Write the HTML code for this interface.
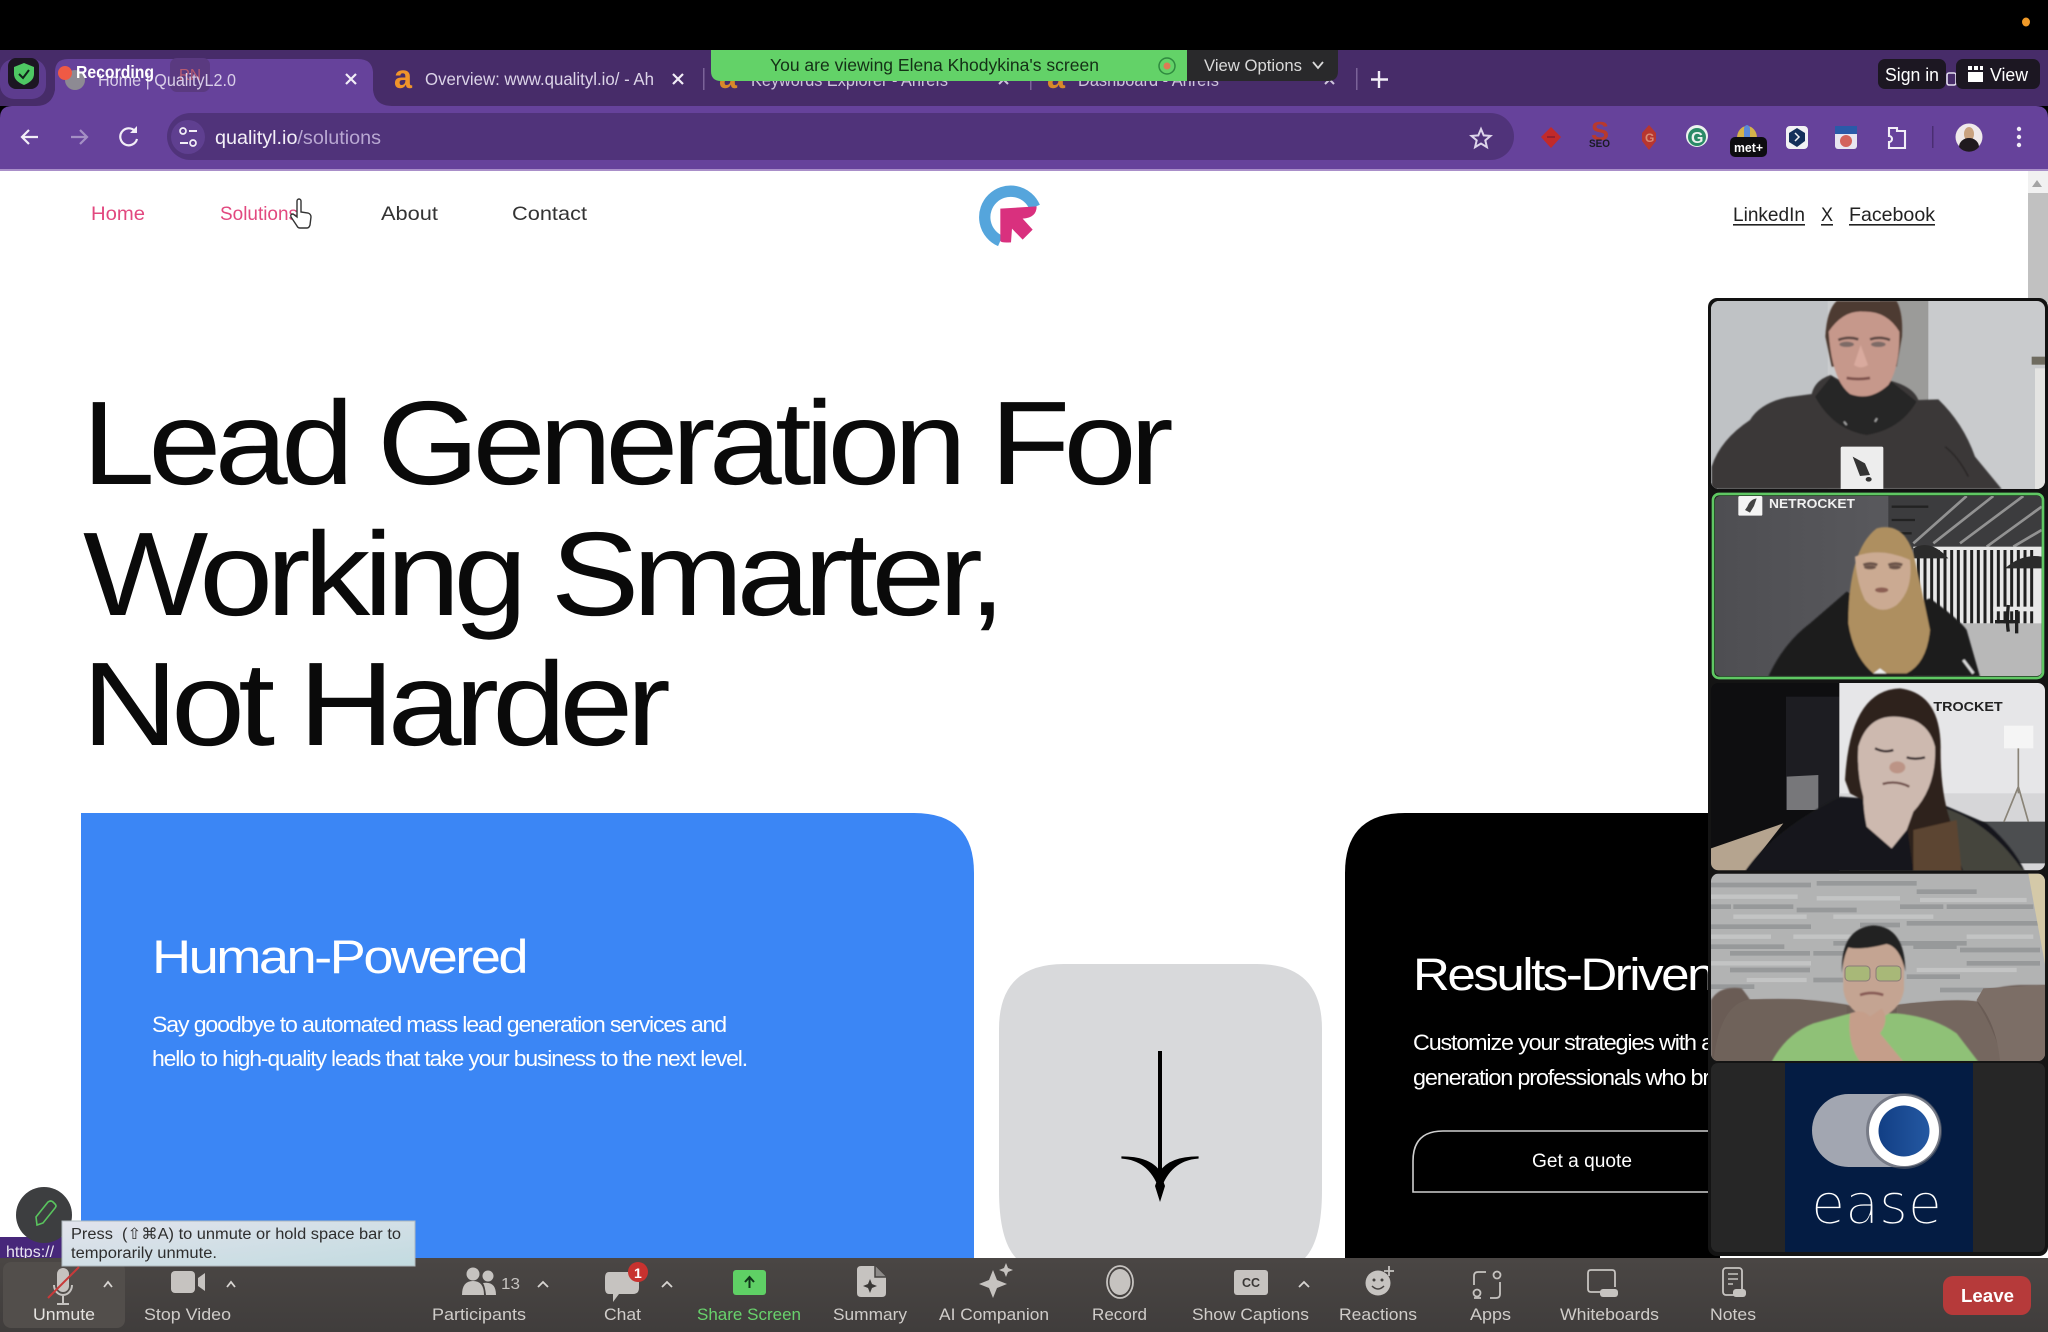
<!DOCTYPE html>
<html lang="en"><head><meta charset="utf-8"><title>Zoom screen share</title>
<style>
html,body{margin:0;padding:0;background:#000;width:2048px;height:1332px;overflow:hidden}
svg{display:block;position:absolute;left:0;top:0}
text{font-family:"Liberation Sans",sans-serif;white-space:pre}
.h{letter-spacing:-6px}
.p{letter-spacing:-1.1px}
.t{letter-spacing:-2.2px}
</style></head><body>
<svg width="2048" height="1332" viewBox="0 0 2048 1332" xmlns="http://www.w3.org/2000/svg">
<defs>
<filter id="b1" x="-10%" y="-10%" width="120%" height="120%"><feGaussianBlur stdDeviation="2.5"/></filter>
<linearGradient id="tip" x1="0" y1="0" x2="1" y2="1"><stop offset="0" stop-color="#e2e3ec"/><stop offset="1" stop-color="#c2dbe0"/></linearGradient>
<linearGradient id="knob" x1="0" y1="0" x2="1" y2="0"><stop offset="0" stop-color="#123f85"/><stop offset="1" stop-color="#2458a2"/></linearGradient>
<linearGradient id="wall2" x1="0" y1="0" x2="1" y2="0"><stop offset="0" stop-color="#4e4e52"/><stop offset="1" stop-color="#626266"/></linearGradient>
<linearGradient id="bar" x1="0" y1="0" x2="0" y2="1"><stop offset="0" stop-color="#4a4644"/><stop offset="1" stop-color="#403d3c"/></linearGradient>
<clipPath id="c1"><rect x="33" y="33" width="1002" height="564" rx="24"/></clipPath>
<clipPath id="c2"><rect x="45" y="618" width="980" height="540" rx="14"/></clipPath>
<clipPath id="c3"><rect x="33" y="9" width="1002" height="562" rx="22"/></clipPath>
<clipPath id="c4"><rect x="33" y="581" width="1002" height="562" rx="22"/></clipPath>
</defs>

<!-- top black -->
<rect width="2048" height="50" fill="#000"/>
<ellipse cx="2026" cy="22" rx="4" ry="4.5" fill="#f09a28"/>

<!-- tab strip -->
<rect y="50" width="2048" height="56" fill="#472c69"/>
<rect x="0" y="59" width="46" height="40" rx="14" fill="#5d3c8e"/>
<path d="M36 106Q52 106 55 90V72Q55 59 68 59H358Q372 59 373 72V90Q375 106 392 106Z" fill="#66429b"/>
<rect x="8" y="58" width="31" height="31" rx="8" fill="#1c1622"/>
<path d="M24 63L34 67V74Q34 81 24 85Q14 81 14 74V67Z" fill="#4ec863"/>
<path d="M19 74L23 78L29 70" fill="none" stroke="#10251a" stroke-width="2"/>
<circle cx="75" cy="80" r="10" fill="#8d8a93"/>
<circle cx="65" cy="73" r="7" fill="#ef5a45"/>
<rect x="170" y="58" width="40" height="34" rx="7" fill="#5a3a80"/>
<text x="179" y="80" font-size="16" fill="#b85a70" textLength="22" lengthAdjust="spacingAndGlyphs">RN</text>
<text x="98" y="86" font-size="17.5" fill="#d9cfe8" textLength="138" lengthAdjust="spacingAndGlyphs">Home | QualityL2.0</text>
<text x="76" y="78" font-size="17.5" font-weight="bold" fill="#fff" textLength="78" lengthAdjust="spacingAndGlyphs">Recording</text>
<path d="M346 74l10 10M356 74l-10 10" stroke="#f2eef7" stroke-width="2.2"/>
<text x="394" y="88" font-size="33" font-weight="bold" fill="#f0952a" textLength="18" lengthAdjust="spacingAndGlyphs">a</text>
<text x="425" y="85" font-size="17.5" fill="#dcd4e8" textLength="229" lengthAdjust="spacingAndGlyphs">Overview: www.qualityl.io/ - Ah</text>
<path d="M673 74l10 10M683 74l-10 10" stroke="#f2eef7" stroke-width="2.2"/>
<rect x="703" y="68" width="1.5" height="22" fill="#7b6399"/>
<text x="719" y="88" font-size="33" font-weight="bold" fill="#d8892a" textLength="18" lengthAdjust="spacingAndGlyphs">a</text>
<text x="751" y="86" font-size="17.5" fill="#cfc5dd" textLength="197" lengthAdjust="spacingAndGlyphs">Keywords Explorer - Ahrefs</text>
<path d="M999 75l9 9M1008 75l-9 9" stroke="#cfc5dd" stroke-width="2"/>
<rect x="1030" y="68" width="1.5" height="22" fill="#7b6399"/>
<text x="1047" y="88" font-size="33" font-weight="bold" fill="#d8892a" textLength="18" lengthAdjust="spacingAndGlyphs">a</text>
<text x="1078" y="86" font-size="17.5" fill="#cfc5dd" textLength="141" lengthAdjust="spacingAndGlyphs">Dashboard - Ahrefs</text>
<path d="M1325 75l9 9M1334 75l-9 9" stroke="#cfc5dd" stroke-width="2"/>
<rect x="1356" y="68" width="1.5" height="22" fill="#7b6399"/>
<path d="M1379 71v17M1371 79.5h17" stroke="#f2eef7" stroke-width="2.4"/>

<!-- zoom banner -->
<path d="M711 50H1187V81H721Q711 81 711 71Z" fill="#63d268"/>
<path d="M1187 50H1338V71Q1338 81 1328 81H1187Z" fill="#29292b"/>
<text x="770" y="71" font-size="17.5" fill="#143016" textLength="329" lengthAdjust="spacingAndGlyphs">You are viewing Elena Khodykina's screen</text>
<circle cx="1167" cy="66" r="8" fill="none" stroke="#2f8a3f" stroke-width="1.5"/>
<circle cx="1167" cy="66" r="3.5" fill="#dd7a55"/>
<text x="1204" y="71" font-size="16.5" fill="#d9d9d9" textLength="98" lengthAdjust="spacingAndGlyphs">View Options</text>
<path d="M1313 62l5 6l5-6" fill="none" stroke="#d9d9d9" stroke-width="1.8"/>
<rect x="1878" y="59" width="68" height="30" rx="7" fill="#1c1722"/>
<text x="1885" y="81" font-size="18" fill="#fff" textLength="54" lengthAdjust="spacingAndGlyphs">Sign in</text>
<rect x="1947" y="73" width="9" height="12" rx="2" fill="none" stroke="#e4dff0" stroke-width="1.6"/>
<rect x="1956" y="59" width="84" height="30" rx="7" fill="#1c1722"/>
<rect x="1968" y="66" width="4" height="4" fill="#fff"/><rect x="1974" y="66" width="4" height="4" fill="#fff"/><rect x="1980" y="66" width="3" height="4" fill="#fff"/><rect x="1968" y="72" width="15" height="10" fill="#fff"/>
<text x="1990" y="81" font-size="18" fill="#fff" textLength="38" lengthAdjust="spacingAndGlyphs">View</text>

<!-- toolbar -->
<path d="M0 118Q0 106 12 106H2036Q2048 106 2048 118V170H0Z" fill="#66429b"/>
<rect y="169" width="2048" height="2" fill="#a98fc9"/>
<rect x="167" y="113" width="1347" height="47" rx="23.5" fill="#50337a"/>
<circle cx="188" cy="137" r="17" fill="#5f3f90"/>
<path d="M38 137H23M29 130l-7 7l7 7" fill="none" stroke="#f2eef7" stroke-width="2.2"/>
<path d="M71 137H86M80 130l7 7l-7 7" fill="none" stroke="#a48fc4" stroke-width="2.2"/>
<path d="M135 131A8.5 8.5 0 1 0 137 139" fill="none" stroke="#f2eef7" stroke-width="2.2"/><path d="M137 126v7h-7z" fill="#f2eef7"/>
<circle cx="183" cy="131" r="3" fill="none" stroke="#f2eef7" stroke-width="1.7"/><path d="M189 131h8M180 143h8" stroke="#f2eef7" stroke-width="1.9"/><circle cx="193" cy="143" r="3" fill="none" stroke="#f2eef7" stroke-width="1.7"/>
<text x="215" y="144" font-size="19.5" textLength="166" lengthAdjust="spacingAndGlyphs"><tspan fill="#f4f0f8">qualityl.io</tspan><tspan fill="#b9a8d2">/solutions</tspan></text>
<path d="M1481 129l2.700 6.400l6.800.5l-5.200 4.500l1.600 6.700l-5.900-3.600l-5.900 3.600l1.600-6.700l-5.200-4.500l6.800-.5z" fill="none" stroke="#ddd5ea" stroke-width="2"/>
<!-- extensions -->
<path d="M1551 127l10 10l-10 11l-10-11z" fill="#c22a2a"/><path d="M1547 137h8" stroke="#8e2030" stroke-width="1.800"/>
<text x="1591" y="140" font-size="26" font-weight="bold" fill="#b8392d" textLength="18" lengthAdjust="spacingAndGlyphs">S</text>
<text x="1589" y="147" font-size="11" font-weight="bold" fill="#1a1a22" textLength="21" lengthAdjust="spacingAndGlyphs">SEO</text>
<path d="M1649 125l7 8v8l-7 9l-7-9v-8z" fill="#b8362f"/><text x="1645" y="142" font-size="12" font-weight="bold" fill="#d88a75">G</text>
<circle cx="1697" cy="136" r="11" fill="#ecf2ee"/><circle cx="1697" cy="137" r="9" fill="#2a8a67"/><text x="1691" y="143" font-size="16" font-weight="bold" fill="#ecf2ee">G</text>
<path d="M1737 138a10 12 0 0 1 20 0z" fill="#d5b34a"/><path d="M1744 128a4 9 0 0 1 6 0v10h-6z" fill="#5b8ad8"/>
<rect x="1730" y="137" width="37" height="20" rx="5" fill="#0d0d10"/>
<text x="1734" y="152" font-size="13" font-weight="bold" fill="#fff" textLength="29" lengthAdjust="spacingAndGlyphs">met+</text>
<rect x="1786" y="126" width="22" height="23" rx="4" fill="#f2f2f4"/><path d="M1797 128l8 5v8l-8 6l-8-5v-9z" fill="#14305a"/><path d="M1795 133l4 4l-4 4" stroke="#f2f2f4" fill="none" stroke-width="1.5"/>
<rect x="1835" y="126" width="22" height="23" rx="3" fill="#e8e6f0"/><rect x="1835" y="126" width="22" height="8" fill="#2a5aa8"/><circle cx="1846" cy="141" r="6" fill="#d3635c"/>
<path d="M1889 128h8v3h8v17h-16v-6a3 3 0 0 0 0-6z" fill="none" stroke="#f2eef7" stroke-width="2.1"/>
<rect x="1932" y="126" width="1.5" height="22" fill="#4a2e72"/>
<circle cx="1969" cy="137" r="13.5" fill="#efe9ea"/><ellipse cx="1969" cy="134" rx="5" ry="7" fill="#c9a27f"/><path d="M1959 147a10 9 0 0 1 20 0a13 13 0 0 1-20 0z" fill="#201a1f"/>
<circle cx="2019" cy="129" r="2.2" fill="#f2eef7"/><circle cx="2019" cy="137" r="2.2" fill="#f2eef7"/><circle cx="2019" cy="145" r="2.2" fill="#f2eef7"/>

<!-- page -->
<rect y="171" width="2048" height="1090" fill="#fff"/>
<rect x="2028" y="171" width="20" height="30" fill="#f1f1f1"/>
<path d="M2037 180l5 7h-10z" fill="#a4a4a4"/>
<rect x="2028" y="193" width="20" height="110" fill="#c1c1c1"/>

<text x="91" y="220" font-size="19.5" fill="#e2487f" textLength="54" lengthAdjust="spacingAndGlyphs">Home</text>
<text x="220" y="220" font-size="19.5" fill="#e2487f" textLength="78" lengthAdjust="spacingAndGlyphs">Solutions</text>
<text x="381" y="220" font-size="19.5" fill="#333" textLength="57" lengthAdjust="spacingAndGlyphs">About</text>
<text x="512" y="220" font-size="19.5" fill="#333" textLength="75" lengthAdjust="spacingAndGlyphs">Contact</text>
<path d="M297 201a2 2 0 0 1 4 0v11l7 1q3 1 3 4l-1 8q-1 3-3 3h-7q-2 0-3-2l-6-9q-1-3 2-3l4 3z" fill="#fff" stroke="#333" stroke-width="1.4"/>

<g transform="translate(936,167) scale(.3333)">
<path d="M193 222A78 78 0 1 1 296 120" fill="none" stroke="#55a5dc" stroke-width="34"/>
<path d="M193 125L302 118Q302 152 260 155L290 188L260 218L228 185L225 226Q195 228 193 222Z" fill="#d9307e"/>
</g>

<text x="1733" y="221" font-size="19.5" fill="#222" textLength="72" lengthAdjust="spacingAndGlyphs">LinkedIn</text>
<text x="1821" y="221" font-size="19.5" fill="#222" textLength="12" lengthAdjust="spacingAndGlyphs">X</text>
<text x="1849" y="221" font-size="19.5" fill="#222" textLength="86" lengthAdjust="spacingAndGlyphs">Facebook</text>
<rect x="1733" y="224" width="72" height="1.6" fill="#222"/><rect x="1821" y="224" width="12" height="1.6" fill="#222"/><rect x="1849" y="224" width="86" height="1.6" fill="#222"/>

<g font-size="119" fill="#0a0a0a">
<text class="h" x="82" y="484" textLength="1085" lengthAdjust="spacingAndGlyphs">Lead Generation For</text>
<text class="h" x="83" y="615" textLength="916" lengthAdjust="spacingAndGlyphs">Working Smarter,</text>
<text class="h" x="82" y="745" textLength="582" lengthAdjust="spacingAndGlyphs">Not Harder</text>
</g>

<!-- cards -->
<path d="M81 813H914Q974 813 974 873V1258H81Z" fill="#3b86f5"/>
<text class="t" x="152" y="973" font-size="47" fill="#fff" textLength="374" lengthAdjust="spacingAndGlyphs">Human-Powered</text>
<text class="p" x="152" y="1032" font-size="22" fill="#fff" textLength="574" lengthAdjust="spacingAndGlyphs">Say goodbye to automated mass lead generation services and</text>
<text class="p" x="152" y="1066" font-size="22" fill="#fff" textLength="595" lengthAdjust="spacingAndGlyphs">hello to high-quality leads that take your business to the next level.</text>

<path d="M1064 964H1257Q1322 964 1322 1029V1190Q1322 1240 1305 1258H1016Q999 1240 999 1190V1029Q999 964 1064 964Z" fill="#d8d9db"/>
<path d="M1160 1051V1196" stroke="#000" stroke-width="4"/>
<path d="M1122 1158Q1150 1160 1160 1190Q1170 1160 1198 1158L1198 1157Q1170 1157 1160 1172Q1150 1157 1122 1157Z" fill="#000" stroke="#000" stroke-width="1.200"/>
<path d="M1160 1172L1155 1186L1160 1202L1165 1186Z" fill="#000"/>

<path d="M1405 813H1720V1258H1345V873Q1345 813 1405 813Z" fill="#000"/>
<text class="t" x="1413" y="990" font-size="45" fill="#fff" textLength="300" lengthAdjust="spacingAndGlyphs">Results-Driven</text>
<text class="p" x="1413" y="1050" font-size="22" fill="#fff" textLength="300" lengthAdjust="spacingAndGlyphs">Customize your strategies with a</text>
<text class="p" x="1413" y="1085" font-size="22" fill="#fff" textLength="300" lengthAdjust="spacingAndGlyphs">generation professionals who bri</text>
<path d="M1720 1131H1443Q1413 1131 1413 1161V1192H1720" fill="none" stroke="#cfcfcf" stroke-width="1.6"/>
<text x="1532" y="1167" font-size="19" fill="#fff" textLength="100" lengthAdjust="spacingAndGlyphs">Get a quote</text>

<!-- video panel -->
<rect x="1708" y="298" width="340" height="958" rx="9" fill="#141414"/>

<!-- v1 -->
<g transform="translate(1700,290) scale(.33333)">
<g clip-path="url(#c1)">
<rect x="33" y="33" width="1002" height="564" fill="#c9cbcd"/>
<rect x="33" y="33" width="350" height="564" fill="#bfc2c5"/>
<rect x="540" y="33" width="145" height="320" fill="#9b9b99"/>
<rect x="1005" y="235" width="35" height="362" fill="#e4e4e2"/><rect x="995" y="200" width="40" height="24" fill="#6f6c60"/>
<g filter="url(#b1)">
<path d="M35 597V530Q60 450 150 390Q180 340 260 322L335 312Q345 270 392 255Q480 310 570 272Q640 290 655 330L715 328Q790 400 825 500L905 597Z" fill="#3b3938"/>
<path d="M395 258Q480 330 575 275L650 335Q600 420 500 435Q400 420 345 320Z" fill="#272525"/>
<path d="M376 140Q380 60 410 33H590Q610 70 606 140L590 230H395Z" fill="#4d3b30"/>
<path d="M386 125Q430 60 490 65Q560 62 598 125Q600 230 565 285Q510 335 450 312Q395 270 386 125Z" fill="#c6988b"/>
<path d="M415 150q30-12 60-2M510 148q30-10 60 2" stroke="#5c4742" stroke-width="8" fill="none"/>
<ellipse cx="440" cy="163" rx="22" ry="8" fill="#7d6a66"/><ellipse cx="535" cy="163" rx="22" ry="8" fill="#7d6a66"/>
<path d="M440 264q35 6 70 0" stroke="#7d514c" stroke-width="8" fill="none"/>
<path d="M482 165l-20 60q20 14 42 0z" fill="#d9aa9e"/>
<path d="M440 405l-8 -10M525 395l6 -10" stroke="#aaa" stroke-width="5"/>
<path d="M735 470q40 30 70 90" stroke="#2a2828" stroke-width="5" fill="none"/>
</g>
<rect x="422" y="470" width="128" height="130" rx="5" fill="#ededed"/>
<path d="M458 500L495 520L510 555L480 558Z" fill="#333"/><ellipse cx="506" cy="568" rx="9" ry="7" fill="#333"/>
</g>
<rect x="29" y="29" width="1010" height="572" rx="26" fill="none" stroke="#111" stroke-width="7"/>
</g>

<!-- v2 -->
<g transform="translate(1700,290) scale(.33333)">
<g clip-path="url(#c2)">
<rect x="45" y="618" width="980" height="540" fill="url(#wall2)"/>
<rect x="565" y="618" width="460" height="160" fill="#3c3c3e"/>
<path d="M640 760L800 618M700 760L880 618M780 760L970 618M860 770L1025 650M940 770L1025 720" stroke="#a8a8a8" stroke-width="8" opacity=".8"/>
<path d="M575 650h110M575 690h70M575 730h60" stroke="#222" stroke-width="7"/>
<rect x="640" y="770" width="385" height="235" fill="#e8e8e8"/>
<path d="M655 780V1000M675 780V1000M695 780V1000M715 780V1000M735 780V1000M755 780V1000M775 780V1000M795 780V1000M815 780V1000M835 780V1000M855 780V1000M875 780V1000M895 780V1000M915 780V1000M935 780V1000M955 780V1000M975 780V1000M995 780V1000" stroke="#202020" stroke-width="9"/>
<rect x="640" y="1000" width="385" height="158" fill="#b8b8b8"/>
<rect x="880" y="950" width="145" height="14" fill="#e8e8e8"/><path d="M925 945q-5 50 0 80M885 995h70M950 960v70" stroke="#202020" stroke-width="10" fill="none"/>
<path d="M640 775q50-30 105 30h-105z" fill="#2b2b2b"/><path d="M915 835q50-45 110-35v35z" fill="#2b2b2b"/>
<g filter="url(#b1)">
<path d="M205 1160Q250 1060 330 1000L440 905Q560 970 690 925Q780 990 800 1020L840 1160Z" fill="#1a1a1c"/>
<path d="M445 1000Q445 780 530 715Q610 695 640 790Q670 920 690 1020Q680 1120 620 1150H520Q460 1100 445 1000Z" fill="#ae8f60"/>
<path d="M465 800Q540 770 630 810Q640 900 590 945Q540 980 495 930Q470 880 465 800Z" fill="#cbaa92"/>
<path d="M490 825q22-8 42 0M565 825q22-8 42 0" stroke="#6a5348" stroke-width="9" fill="none"/>
<ellipse cx="510" cy="832" rx="18" ry="6" fill="#6a5348"/><ellipse cx="585" cy="832" rx="18" ry="6" fill="#6a5348"/>
<ellipse cx="545" cy="900" rx="20" ry="8" fill="#8c5e52"/>
<path d="M520 1150l20-15l20 15z" fill="#eee"/>
<path d="M790 1110l30 40" stroke="#ddd" stroke-width="8"/>
</g>
<rect x="115" y="618" width="72" height="59" rx="4" fill="#f4f4f4"/>
<path d="M170 625Q150 628 142 650L135 660L150 668L162 648Z" fill="#444"/>
</g>
<text x="207" y="654" font-size="38" font-weight="bold" fill="#f0f0f0" textLength="258" lengthAdjust="spacingAndGlyphs">NETROCKET</text>
<rect x="39" y="612" width="990" height="552" rx="18" fill="none" stroke="#5fc763" stroke-width="8"/>
</g>

<!-- v3 -->
<g transform="translate(1700,680) scale(.33333)">
<g clip-path="url(#c3)">
<rect x="33" y="9" width="385" height="562" fill="#0e0e10"/>
<rect x="258" y="50" width="160" height="340" fill="#1d1d22"/>
<rect x="418" y="9" width="620" height="440" fill="#e6e6e8"/>
<rect x="418" y="340" width="620" height="231" fill="#d6d6d8"/>
<path d="M260 290l95 -5v105h-95z" fill="#77777a"/>
<path d="M33 505L250 430L140 571H33Z" fill="#b5a48f"/>
<path d="M830 425H1040V550H860Z" fill="#4c4e50"/>
<rect x="912" y="137" width="88" height="68" fill="#f5f5f5"/>
<path d="M955 205V340M955 320L912 425M955 320L985 425" stroke="#8a8478" stroke-width="5" fill="none"/>
<text x="700" y="93" font-size="38" font-weight="bold" fill="#222" textLength="208" lengthAdjust="spacingAndGlyphs">TROCKET</text>
<g filter="url(#b1)">
<path d="M135 575Q220 450 420 350L720 370L860 430Q940 500 975 575Z" fill="#13151c"/>
<path d="M720 380Q860 420 960 560L975 575H790Z" fill="#44443c"/>
<path d="M435 300Q450 30 600 25Q720 40 722 200Q720 330 750 420L775 575H640L620 430L450 340Z" fill="#2e211b"/>
<path d="M640 450L770 420L785 575H640Z" fill="#5c4530"/>
<path d="M475 200Q510 80 640 120Q690 140 705 200Q710 320 640 395L620 450L575 505L500 440Q490 390 490 350Q470 280 475 200Z" fill="#cdb9af"/>
<path d="M525 205q30 15 55 5M620 232q25 8 55 0" stroke="#33262a" stroke-width="7" fill="none"/>
<ellipse cx="592" cy="262" rx="24" ry="18" fill="#bc9486"/>
<path d="M548 312q40-12 80 8" stroke="#6e4e48" stroke-width="7" fill="none"/>
</g>
</g>
</g>

<!-- v4 -->
<g transform="translate(1700,680) scale(.33333)">
<g clip-path="url(#c4)">
<rect x="33" y="581" width="1002" height="562" fill="#b2b3b3"/>
<g opacity=".45">
<path d="M33 615h300M350 610h300M650 635h180M33 680h60M100 680h180M290 690h180M600 680h130M740 680h260M33 740h300M480 735h120M620 730h400M33 800h220M400 790h400M780 810h240M90 870h240M640 800h130M33 920h130M340 900h90M620 890h160M720 930h180M800 850h220M340 820h160M90 820h240" stroke="#777a7c" stroke-width="14"/>
<path d="M33 650h260M350 655h250M660 660h320M100 710h220M400 710h300M33 770h180M280 770h200M800 770h200M33 850h300M450 860h130M650 870h300M140 900h180" stroke="#d8d9d9" stroke-width="13"/>
</g>
<path d="M985 581H1040V880Z" fill="#d4c9a8"/>
<path d="M33 1145V960Q60 915 125 925Q145 950 150 960Q300 950 445 975L590 975Q760 955 830 965Q850 920 960 915L1040 915V1145Z" fill="#6a5c55" filter="url(#b1)"/>
<path d="M40 1145Q60 970 150 958H300L440 975V1030L260 1145Z" fill="#6f625a"/>
<path d="M590 975Q760 955 830 965Q880 1040 910 1145H740L590 1000Z" fill="#75675f"/>
<path d="M900 1145Q890 1030 830 960L850 925L1035 915V1145Z" fill="#7c6e66"/>
<g filter="url(#b1)">
<path d="M215 1145Q260 1060 340 1030L450 1000L590 1000Q700 1010 770 1060L835 1145Z" fill="#8fc177"/>
<path d="M430 870Q430 740 520 738Q610 740 612 870V930Q600 1000 520 1020Q440 1000 430 930Z" fill="#c4a492"/>
<path d="M426 880Q420 745 520 736Q615 740 616 875Q600 800 560 792Q480 812 445 802Q430 830 426 880Z" fill="#202022"/>
<path d="M450 1000Q490 985 510 1010L545 985Q570 1020 540 1060L610 1145H480Q440 1090 450 1000Z" fill="#c59e8a"/>
<path d="M480 945q35-12 70 0" stroke="#875a55" stroke-width="8" fill="none"/>
</g>
<rect x="435" y="858" width="75" height="45" rx="12" fill="#a8b878" stroke="#8a7a78" stroke-width="3"/>
<rect x="528" y="858" width="75" height="45" rx="12" fill="#a8b878" stroke="#8a7a78" stroke-width="3"/>
</g>
</g>

<!-- ease tile -->
<rect x="1711" y="1063" width="334" height="189" rx="7" fill="#262626"/>
<rect x="1785" y="1063" width="188" height="189" fill="#041c43"/>
<rect x="1812" y="1094" width="129" height="73" rx="36.5" fill="#a2a6b1"/>
<circle cx="1904" cy="1131" r="38" fill="#5a5f6a" opacity=".6"/>
<circle cx="1904" cy="1131" r="35" fill="#fff"/>
<circle cx="1904" cy="1131" r="25.5" fill="url(#knob)"/>
<text x="1811" y="1223" font-size="55" font-weight="200" fill="#fff" stroke="#041c43" stroke-width=".8" textLength="131" lengthAdjust="spacingAndGlyphs" style="font-family:'DejaVu Sans',sans-serif">ease</text>

<!-- bottom UI overlays -->
<rect y="1237" width="65" height="22" fill="#47277a"/>
<text x="6" y="1257" font-size="16" fill="#e8e4f0">https://</text>
<circle cx="44" cy="1215" r="28" fill="#3d3e40"/>
<path d="M37 1225l-1 -8l12-15q3-2 5 0l2 2q2 2 0 4l-12 15z" fill="none" stroke="#59c45e" stroke-width="1.6"/>

<rect y="1258" width="2048" height="74" fill="url(#bar)"/>
<rect x="3" y="1262" width="122" height="66" rx="8" fill="#524e4b"/>

<rect x="62" y="1221" width="353" height="45" fill="url(#tip)" stroke="#aeb8be" stroke-width="1"/>
<text x="71" y="1239" font-size="15.5" fill="#2e2e2e" textLength="330" lengthAdjust="spacingAndGlyphs">Press  (⇧⌘A) to unmute or hold space bar to</text>
<text x="71" y="1258" font-size="15.5" fill="#2e2e2e" textLength="146" lengthAdjust="spacingAndGlyphs">temporarily unmute.</text>

<!-- toolbar icons -->
<g fill="#c6c3c0">
<rect x="57" y="1268" width="12" height="24" rx="6"/>
<path d="M54 1285a9 10 0 0 0 18 0M63 1296v7M57 1304h12" fill="none" stroke="#c6c3c0" stroke-width="2"/>
<path d="M48 1298L79 1267" stroke="#c83a3a" stroke-width="2"/>
<path d="M104 1287l4-5l4 5M227 1287l4-5l4 5M538 1287l5-5l5 5M662 1287l5-5l5 5M1299 1287l5-5l5 5" fill="none" stroke="#d8d5d2" stroke-width="1.8"/>
<rect x="171" y="1271" width="24" height="22" rx="4"/><path d="M198 1278l7-5v18l-7-5z"/>
<circle cx="473" cy="1274" r="6.5"/><circle cx="488" cy="1276" r="5.5"/><path d="M462 1295q0-14 11-14t11 14zM486 1295q-1-9-3-12q13-2 13 12z"/>
<path d="M609 1272h24q6 0 6 6v10q0 6-6 6h-14l-6 8v-8h-4q-4 0-4-6v-10q0-6 4-6z"/>
<rect x="733" y="1270" width="33" height="25" rx="3" fill="#5fd065"/>
<path d="M749.500 1288v-10M745 1282l4.500-5l4.500 5" fill="none" stroke="#10361a" stroke-width="2"/>
<path d="M857 1270q0-4 4-4h14l11 11v16q0 4-4 4h-21q-4 0-4-4z"/><path d="M875 1266v11h11" fill="#8d8a88" stroke="#454240" stroke-width="1.500"/>
<path d="M870 1279l2 5l5 2l-5 2l-2 5l-2-5l-5-2l5-2z" fill="#3a3836"/>
<path d="M993 1270l4 10l10 4l-10 4l-4 10l-4-10l-10-4l10-4zM1006 1263l2 5l5 2l-5 2l-2 5l-2-5l-5-2l5-2z"/>
<ellipse cx="1120" cy="1282" rx="13" ry="16" fill="none" stroke="#c6c3c0" stroke-width="1.800"/><ellipse cx="1120" cy="1282" rx="10.500" ry="13"/>
<rect x="1234" y="1270" width="34" height="25" rx="3"/>
<circle cx="1378" cy="1283" r="12.500"/><circle cx="1374" cy="1280" r="1.500" fill="#454240"/><circle cx="1382" cy="1280" r="1.500" fill="#454240"/><path d="M1372 1286q6 6 12 0" stroke="#454240" stroke-width="1.500" fill="none"/>
<path d="M1389 1266v10M1384 1271h10" stroke="#c6c3c0" stroke-width="1.800"/>
<path d="M1486 1272h-8q-4 0-4 4v9M1474 1298h7M1500 1282v12q0 4-4 4h-6" fill="none" stroke="#c6c3c0" stroke-width="1.800"/>
<circle cx="1497" cy="1275" r="3.500" fill="none" stroke="#c6c3c0" stroke-width="1.800"/><circle cx="1477" cy="1293" r="3.500" fill="none" stroke="#c6c3c0" stroke-width="1.800"/>
<path d="M1601 1292h-10q-3 0-3-3v-16q0-3 3-3h21q3 0 3 3v14" fill="none" stroke="#c6c3c0" stroke-width="1.800"/><rect x="1600" y="1289" width="18" height="8" rx="3"/>
<rect x="1723" y="1268" width="19" height="27" rx="3" fill="none" stroke="#c6c3c0" stroke-width="1.800"/><path d="M1728 1274h10M1728 1279h10M1728 1284h5" stroke="#c6c3c0" stroke-width="1.500"/><rect x="1733" y="1289" width="13" height="8" rx="3"/>
</g>
<text x="1242" y="1287" font-size="13" font-weight="bold" fill="#3a3836" textLength="18" lengthAdjust="spacingAndGlyphs">CC</text>
<text x="501" y="1289" font-size="16" fill="#c6c3c0" textLength="19" lengthAdjust="spacingAndGlyphs">13</text>
<circle cx="638" cy="1272" r="10" fill="#c8322f"/>
<text x="634" y="1278" font-size="14" font-weight="bold" fill="#fff">1</text>

<g font-size="16.500" fill="#cfccc9">
<text x="33" y="1320" fill="#e4e2df" textLength="62" lengthAdjust="spacingAndGlyphs">Unmute</text>
<text x="144" y="1320" textLength="87" lengthAdjust="spacingAndGlyphs">Stop Video</text>
<text x="432" y="1320" textLength="94" lengthAdjust="spacingAndGlyphs">Participants</text>
<text x="604" y="1320" textLength="37" lengthAdjust="spacingAndGlyphs">Chat</text>
<text x="697" y="1320" fill="#68d26c" textLength="104" lengthAdjust="spacingAndGlyphs">Share Screen</text>
<text x="833" y="1320" textLength="74" lengthAdjust="spacingAndGlyphs">Summary</text>
<text x="939" y="1320" textLength="110" lengthAdjust="spacingAndGlyphs">AI Companion</text>
<text x="1092" y="1320" textLength="55" lengthAdjust="spacingAndGlyphs">Record</text>
<text x="1192" y="1320" textLength="117" lengthAdjust="spacingAndGlyphs">Show Captions</text>
<text x="1339" y="1320" textLength="78" lengthAdjust="spacingAndGlyphs">Reactions</text>
<text x="1470" y="1320" textLength="41" lengthAdjust="spacingAndGlyphs">Apps</text>
<text x="1560" y="1320" textLength="99" lengthAdjust="spacingAndGlyphs">Whiteboards</text>
<text x="1710" y="1320" textLength="46" lengthAdjust="spacingAndGlyphs">Notes</text>
</g>
<rect x="1943" y="1276" width="88" height="39" rx="10" fill="#b63a3a"/>
<text x="1961" y="1302" font-size="18" font-weight="bold" fill="#fff" textLength="53" lengthAdjust="spacingAndGlyphs">Leave</text>
</svg>
</body></html>
